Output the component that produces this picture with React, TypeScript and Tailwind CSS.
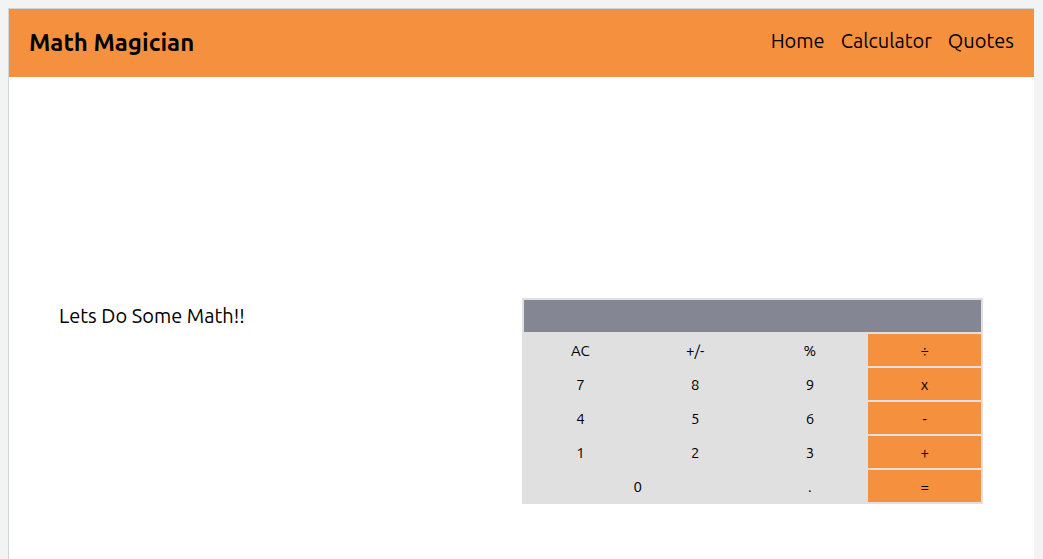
import React from "react";

type Key = { label: string; operator?: boolean; wide?: boolean };

const keys: Key[] = [
  { label: "AC" }, { label: "+/-" }, { label: "%" }, { label: "÷", operator: true },
  { label: "7" }, { label: "8" }, { label: "9" }, { label: "x", operator: true },
  { label: "4" }, { label: "5" }, { label: "6" }, { label: "-", operator: true },
  { label: "1" }, { label: "2" }, { label: "3" }, { label: "+", operator: true },
  { label: "0", wide: true }, { label: "." }, { label: "=", operator: true },
];

function Header() {
  return (
    <header className="flex items-start justify-between bg-[#f5913e] px-5 pt-4 pb-4">
      <h1 className="text-2xl leading-9 font-bold">Math Magician</h1>
      <nav className="flex gap-4 text-xl leading-8">
        <a href="#home">Home</a>
        <a href="#calculator">Calculator</a>
        <a href="#quotes">Quotes</a>
      </nav>
    </header>
  );
}

function Calculator() {
  return (
    <div className="grid grid-cols-4 gap-0.5 bg-[#e0e0e0] p-0.5 text-[15px]">
      <output aria-label="Result" className="col-span-4 block h-8 bg-[#858694]" />
      {keys.map(({ label, operator, wide }) => (
        <button
          key={label}
          type="button"
          className={`h-8 pt-0.5 ${operator ? "bg-[#f5913e]" : "bg-[#e0e0e0]"} ${wide ? "col-span-2" : ""}`}
        >
          {label}
        </button>
      ))}
    </div>
  );
}

export default function App() {
  return (
    <div className="flex min-h-screen flex-col bg-[#f2f4f4] pt-2 pr-[9px] pl-2 font-[Ubuntu,'Noto_Sans',sans-serif] text-black">
      <div className="flex-1 border-t border-l border-[#d2d4d5] bg-white">
        <Header />
        <main className="grid grid-cols-2 items-start gap-0.5 pt-[221px] pr-[51px] pb-12 pl-[50px]">
          <h2 className="pt-1 text-xl leading-7">Lets Do Some Math!!</h2>
          <Calculator />
        </main>
      </div>
    </div>
  );
}
